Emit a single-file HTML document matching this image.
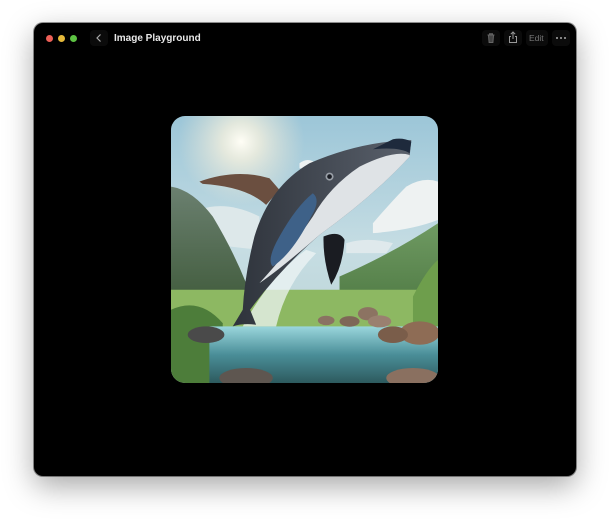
<!DOCTYPE html>
<html><head><meta charset="utf-8"><style>
html,body{margin:0;padding:0;background:#fff;width:610px;height:521px;overflow:hidden;font-family:"Liberation Sans",sans-serif}
.win{position:absolute;left:34px;top:23px;width:542px;height:453px;background:#000;border-radius:9px;box-shadow:0 10px 30px rgba(0,0,0,.35),0 0 0 1px rgba(0,0,0,.4)}
.dot{position:absolute;top:12px;width:7px;height:7px;border-radius:50%}
.t{position:absolute;left:80px;top:10px;color:#e8e8e8;font-size:10px;font-weight:bold}
.btn{position:absolute;top:7px;height:16px;background:#0b0b0b;border-radius:4px}
.img{position:absolute;left:137px;top:93px;width:267px;height:267px;border-radius:14px;overflow:hidden}
</style></head><body>
<div class="win">
<div class="dot" style="left:12px;background:#ec5f57"></div>
<div class="dot" style="left:24px;background:#e5b93a"></div>
<div class="dot" style="left:36px;background:#5dc343"></div>
<div class="btn" style="left:56px;width:18px"></div>
<svg style="position:absolute;left:60px;top:10px" width="10" height="10" viewBox="0 0 10 10"><path d="M6.5 1.5 3 5 6.5 8.5" stroke="#aaa" stroke-width="1.2" fill="none"/></svg>
<div class="t">Image Playground</div>
<div class="btn" style="left:448px;width:18px"></div>
<svg style="position:absolute;left:451px;top:9px" width="12" height="12" viewBox="0 0 12 12"><path d="M2.5 3h7M4.5 3V1.8h3V3M3.5 3.5l.6 7h3.8l.6-7" stroke="#666" stroke-width="1" fill="#444"/></svg>
<div class="btn" style="left:470px;width:18px"></div>
<svg style="position:absolute;left:473px;top:8px" width="12" height="13" viewBox="0 0 12 13"><path d="M6 1v7M3.8 3.2 6 1l2.2 2.2M4 5.5H2.5v6h7v-6H8" stroke="#999" stroke-width="1" fill="none"/></svg>
<div class="btn" style="left:492px;width:22px"></div>
<div style="position:absolute;left:495px;top:10px;color:#777;font-size:8.5px">Edit</div>
<div class="btn" style="left:518px;width:18px"></div>
<svg style="position:absolute;left:521px;top:13px" width="12" height="4" viewBox="0 0 12 4"><circle cx="2" cy="2" r="1" fill="#aaa"/><circle cx="6" cy="2" r="1" fill="#aaa"/><circle cx="10" cy="2" r="1" fill="#aaa"/></svg>
<div class="img">
<svg width="267" height="267" viewBox="35 18 800 802" preserveAspectRatio="none">
<defs>
<linearGradient id="sky" x1="0" y1="0" x2="0" y2="1"><stop offset="0" stop-color="#9cc6d8"/><stop offset=".5" stop-color="#c6dde3"/><stop offset="1" stop-color="#b7d0d0"/></linearGradient>
<radialGradient id="sun" cx="245" cy="95" r="190" gradientUnits="userSpaceOnUse"><stop offset="0" stop-color="#fffef6"/><stop offset=".3" stop-color="#f4f0de" stop-opacity=".8"/><stop offset="1" stop-color="#e8e4d4" stop-opacity="0"/></radialGradient>
<linearGradient id="wat" x1="0" y1="0" x2="0" y2="1"><stop offset="0" stop-color="#9ad6dc"/><stop offset=".5" stop-color="#4a8e98"/><stop offset="1" stop-color="#2d5a5e"/></linearGradient>
<linearGradient id="body" x1="0" y1="0" x2="1" y2="0"><stop offset="0" stop-color="#2e333b"/><stop offset="1" stop-color="#5a616c"/></linearGradient>
<linearGradient id="lm" x1="0" y1="0" x2="0" y2="1"><stop offset="0" stop-color="#6b8070"/><stop offset="1" stop-color="#3f5a3a"/></linearGradient>
<linearGradient id="rm" x1="0" y1="0" x2="0" y2="1"><stop offset="0" stop-color="#6f9a62"/><stop offset="1" stop-color="#4f7a44"/></linearGradient>
</defs>
<rect x="35" y="18" width="800" height="802" fill="url(#sky)"/>
<rect x="35" y="18" width="800" height="500" fill="url(#sun)"/>
<path d="M640 340 Q700 270 740 230 Q790 200 835 215 L835 330 Q760 360 640 370Z" fill="#eef2f2"/>
<path d="M560 400 Q620 380 700 400 L680 430 L560 430Z" fill="#dfe9ec"/>
<path d="M420 160 Q445 140 470 160 Q460 180 420 175Z" fill="#eef2f2"/>
<path d="M120 300 Q200 270 300 320 L300 420 L120 400Z" fill="#dde8ea"/>
<path d="M35 230 Q100 240 160 320 Q220 420 260 520 L260 600 L35 600Z" fill="url(#lm)"/>
<path d="M540 500 Q700 430 835 340 L835 600 L540 600Z" fill="url(#rm)"/>
<path d="M35 540 L835 540 L835 660 L35 660Z" fill="#8db862"/>
<path d="M35 600 Q120 560 190 640 L190 820 L35 820Z" fill="#4d7d3a"/>
<path d="M760 560 Q800 480 835 450 L835 680 L760 680Z" fill="#6e9e4c"/>
<rect x="150" y="650" width="685" height="170" fill="url(#wat)"/>
<ellipse cx="140" cy="675" rx="55" ry="25" fill="#4a4a4a"/>
<ellipse cx="625" cy="612" rx="30" ry="20" fill="#8c7362"/>
<ellipse cx="660" cy="635" rx="35" ry="18" fill="#9a8070"/>
<ellipse cx="570" cy="635" rx="30" ry="16" fill="#7e6757"/>
<ellipse cx="500" cy="632" rx="25" ry="14" fill="#8a7262"/>
<ellipse cx="780" cy="670" rx="60" ry="35" fill="#8e6c55"/>
<ellipse cx="700" cy="675" rx="45" ry="25" fill="#7a5d4a"/>
<ellipse cx="760" cy="805" rx="80" ry="30" fill="#8a7060"/>
<ellipse cx="260" cy="805" rx="80" ry="30" fill="#5e5650"/>
<path d="M250 650 Q330 500 440 420 L470 430 Q380 520 350 650Z" fill="#eef4f4" opacity=".75"/>
<path d="M120 215 Q230 175 330 205 L360 240 L320 285 Q260 230 130 222Z" fill="#6b4f40"/>
<path d="M755 90 Q600 95 450 160 Q330 230 285 380 Q255 500 250 600 L220 650 Q250 640 290 645 L272 600 Q360 480 480 375 Q640 260 750 140Z" fill="url(#body)"/>
<path d="M750 135 Q700 120 600 170 Q510 230 460 320 Q400 410 300 520 Q360 480 480 375 Q640 260 750 140Z" fill="#dfe3e6"/>
<path d="M700 88 Q730 82 755 95 L750 130 Q720 110 640 118Z" fill="#1e2a3c"/>
<path d="M460 250 Q485 270 455 320 Q400 430 340 470 Q320 450 360 380 Q410 290 460 250Z" fill="#3e6188"/>
<path d="M492 380 Q540 360 555 390 Q550 470 515 525 Q490 450 492 380Z" fill="#1a1c22"/>
<circle cx="510" cy="200" r="12" fill="#9aa0a8"/>
<circle cx="510" cy="200" r="7" fill="#1a1d24"/>
</svg>
</div>
</div>
</body></html>
